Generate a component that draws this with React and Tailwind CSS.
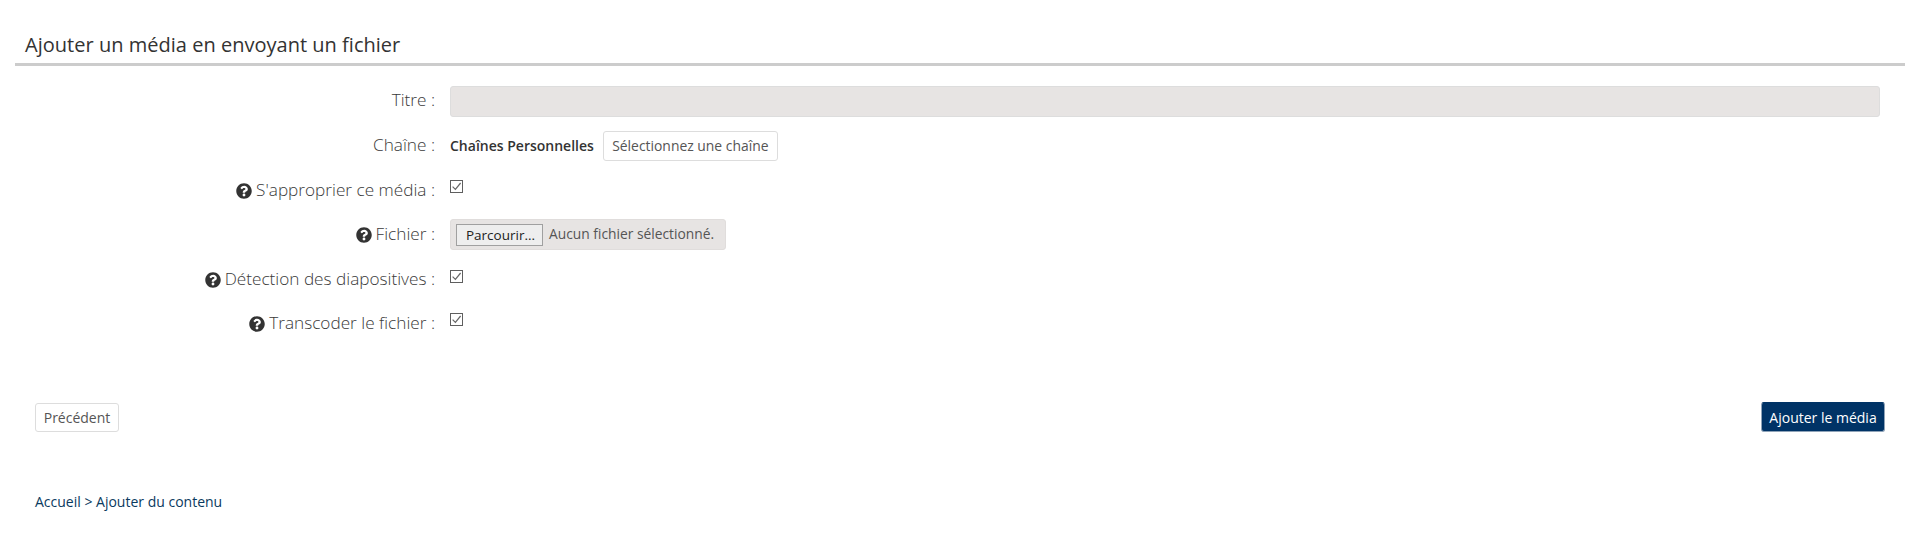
import { FaQuestionCircle } from "react-icons/fa";

const Check = () => (
  <span className="flex h-[13px] w-[13px] items-center justify-center border border-[#5f5f5f] bg-white">
    <svg viewBox="0 0 11 11" className="h-[11px] w-[11px] fill-none stroke-[#666] stroke-[1.2]">
      <path d="M1.6 5.6 L4.4 8.4 L9.6 2" />
    </svg>
  </span>
);

const Row = ({ label, help, className, labelClass, children }) => (
  <div className={`flex items-start ${className}`}>
    <label className={`flex w-[435px] items-center justify-end text-[17.2px] leading-[24px] font-light text-[#3a3a3a] ${labelClass}`}>
      {help && <FaQuestionCircle className="mr-[4px] mt-[2px] h-[16px] w-[16px] text-[#333]" />}
      {label}
    </label>
    <div className="ml-[15px] min-w-0 flex-1">{children}</div>
  </div>
);

const App = () => {
  return (
    <div className="h-[535px] bg-white font-['Open_Sans',sans-serif] text-[#333]">
      {/* Title */}
      <div className="pt-[32px] mx-[15px] border-b-[3px] border-[#cccccc] pb-[5px] pl-[10px]">
        <h2 className="text-[20px] leading-[26px] font-normal text-[#333] tracking-[0.02px]">Ajouter un média en envoyant un fichier</h2>
      </div>

      {/* Form */}
      <div className="pt-[20px]">
        <Row label="Titre :" className="mr-[40px]" labelClass="pt-[2px]">
          <input className="block h-[31px] w-full rounded-[3px] border border-[#dddddd] bg-[#e7e4e3]" readOnly />
        </Row>
        <Row label="Chaîne :" className="mt-[14px]" labelClass="pt-[2px]">
          <div className="flex items-center">
            <span className="text-[14px] leading-[20px] font-semibold text-[#333]">Chaînes Personnelles</span>
            <button className="ml-[9px] h-[30px] w-[175px] rounded-[3px] border border-[#dddddd] bg-white text-[13.9px] text-[#555]">
              Sélectionnez une chaîne
            </button>
          </div>
        </Row>
        <Row label="S'approprier ce média :" help className="mt-[17px]">
          <div className="pt-[2px]"><Check /></div>
        </Row>
        <Row label="Fichier :" help className="mt-[17px]" labelClass="pt-[3px]">
          <div className="flex h-[31px] w-[276px] items-center rounded-[3px] border border-[#e0dddc] bg-[#e7e4e3] pl-[5px] text-[13.8px] text-[#555]">
            <button className="h-[22px] w-[87px] border border-[#a0a0a0] bg-[#eeeeee] pl-[2px] text-[13.5px] leading-[20px] text-[#222]">Parcourir...</button>
            <span className="ml-[6px]">Aucun fichier sélectionné.</span>
          </div>
        </Row>
        <Row label="Détection des diapositives :" help className="mt-[17px]">
          <div className="pt-[3px]"><Check /></div>
        </Row>
        <Row label="Transcoder le fichier :" help className="mt-[20px]">
          <div className="pt-[2px]"><Check /></div>
        </Row>
      </div>

      {/* Actions */}
      <div className="mt-[67px] ml-[35px] mr-[35px] flex items-center justify-between">
        <button className="h-[29px] w-[84px] rounded-[3px] border border-[#dddddd] bg-white text-[14px] text-[#555]">Précédent</button>
        <button className="h-[30px] w-[124px] rounded-[3px] border border-[#8fa3b8] border-t-[#003366] bg-[#003366] text-[14px] text-white">Ajouter le média</button>
      </div>

      {/* Breadcrumb */}
      <div className="mt-[60px] ml-[35px] text-[14px] leading-[20px] text-[#0a3a60]">
        <a href="#">Accueil</a> &gt; <a href="#">Ajouter du contenu</a>
      </div>
    </div>
  );
};

export default App;
